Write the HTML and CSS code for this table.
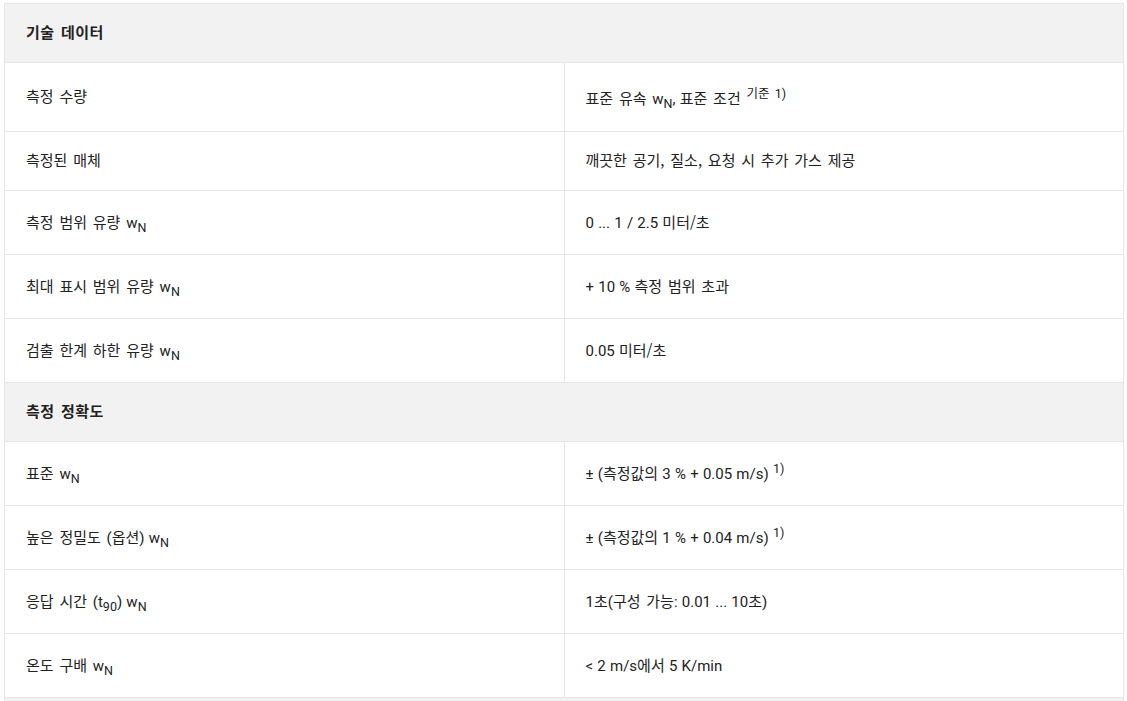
FILE: index.html
```html
<!DOCTYPE html>
<html lang="ko">
<head>
<meta charset="utf-8">
<link rel="stylesheet" href="styles.css">
</head>
<body>
<table class="spec">
  <tbody>
    <tr class="group"><th colspan="2"><span class="k">기술 데이터</span></th></tr>
    <tr class="tall"><td><span class="k">측정 수량</span></td><td><span class="k">표준 유속 </span>w<sub>N</sub>, <span class="k">표준 조건 </span><sup><span class="k">기준 </span>1)</sup></td></tr>
    <tr><td><span class="k">측정된 매체</span></td><td><span class="k">깨끗한 공기, 질소, 요청 시 추가 가스 제공</span></td></tr>
    <tr class="mid"><td><span class="k">측정 범위 유량 </span>w<sub>N</sub></td><td>0 ... 1 / 2.5 <span class="k">미터/초</span></td></tr>
    <tr class="mid"><td><span class="k">최대 표시 범위 유량 </span>w<sub>N</sub></td><td>+ 10 % <span class="k">측정 범위 초과</span></td></tr>
    <tr class="mid"><td><span class="k">검출 한계 하한 유량 </span>w<sub>N</sub></td><td>0.05 <span class="k">미터/초</span></td></tr>
    <tr class="group"><th colspan="2"><span class="k">측정 정확도</span></th></tr>
    <tr class="mid"><td><span class="k">표준 </span>w<sub>N</sub></td><td>± (<span class="k">측정값의</span> 3 % + 0.05 m/s) <sup>1)</sup></td></tr>
    <tr class="mid"><td><span class="k">높은 정밀도 </span>(<span class="k">옵션</span>) w<sub>N</sub></td><td>± (<span class="k">측정값의</span> 1 % + 0.04 m/s) <sup>1)</sup></td></tr>
    <tr class="mid"><td><span class="k">응답 시간 </span>(t<sub>90</sub>) w<sub>N</sub></td><td>1<span class="k">초</span>(<span class="k">구성 가능</span>: 0.01 ... 10<span class="k">초</span>)</td></tr>
    <tr class="mid"><td><span class="k">온도 구배 </span>w<sub>N</sub></td><td>&lt; 2 m/s<span class="k">에서</span> 5 K/min</td></tr>
    <tr class="group"><th colspan="2"></th></tr>
  </tbody>
</table>
</body>
</html>
```
FILE: styles.css
```css
html, body {
  margin: 0;
  padding: 0;
  background: #ffffff;
}
body {
  padding: 3px 3px 0 4px;
  font-family: Roboto, "Noto Sans CJK KR", sans-serif;
  font-size: 15px;
  color: #222222;
  word-spacing: 0.5px;
}
.spec {
  width: 1120px;
  border-collapse: collapse;
  table-layout: fixed;
}
.spec th,
.spec td {
  border: 1px solid #e6e6e6;
  padding: 20px 20px 19px 21px;
  line-height: 19px;
  height: 19px;
  text-align: left;
  vertical-align: middle;
  width: 50%;
}
.spec .mid td {
  height: 24px;
}
.spec .tall td {
  height: 29px;
}
.spec sub,
.spec sup {
  line-height: 0;
}
.spec .group th {
  background: #f2f2f2;
  font-weight: 700;
}
.spec .group .k {
  letter-spacing: 0.5px;
}
.k {
  font-family: "Noto Sans CJK KR", sans-serif;
  line-height: 1;
  word-spacing: 1.6px;
}
```
